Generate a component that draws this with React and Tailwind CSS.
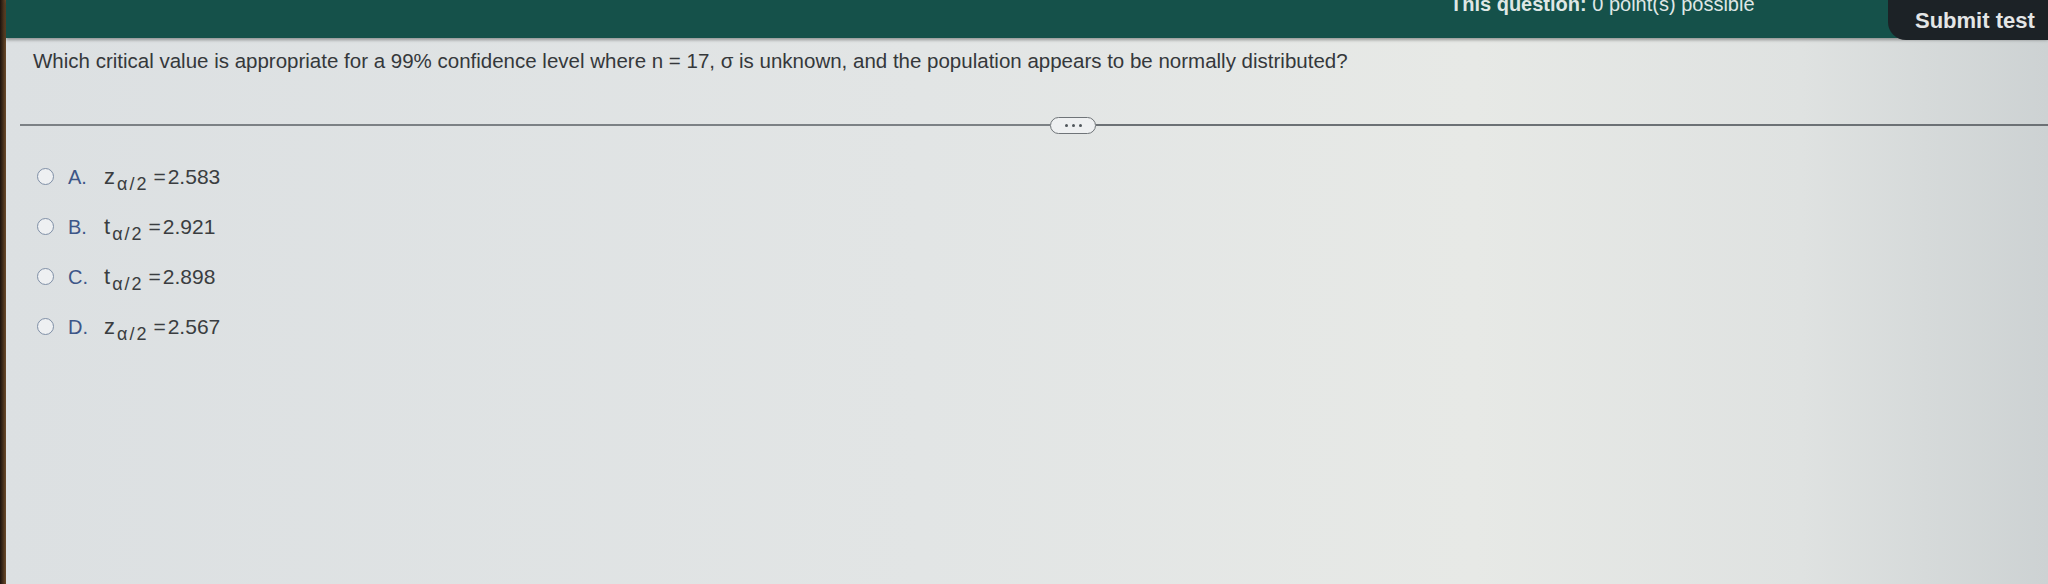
const options = [
  { letter: 'A', sym: 'z', value: '2.583' },
  { letter: 'B', sym: 't', value: '2.921' },
  { letter: 'C', sym: 't', value: '2.898' },
  { letter: 'D', sym: 'z', value: '2.567' },
];

const Option = ({ letter, sym, value }) => (
  <div className="flex items-center h-[50px]">
    <span className="w-[17px] h-[17px] rounded-full border-[1.5px] border-[#7f8fa6] bg-[#eef0f2]" />
    <span className="ml-[14px] w-[36px] text-[20px] text-[#3d5688]">{letter}.</span>
    <span className="text-[21px] text-[#3a3d40] flex items-baseline">
      <span className="text-[22px]">{sym}</span>
      <span className="ml-[2px] text-[18px] relative top-[6px] tracking-[2px]">α/2</span>
      <span className="ml-[5px]">=</span>
      <span className="ml-[2px]">{value}</span>
    </span>
  </div>
);

export default function App() {
  return (
    <div
      className="w-[2048px] h-[584px] flex overflow-hidden bg-[linear-gradient(90deg,#dce0e2_0%,#e2e5e5_45%,#e7e9e6_72%,#dfe2e1_88%,#cdd2d3_100%)]"
      style={{ fontFamily: '"Liberation Sans", Arial, sans-serif' }}
    >
      {/* screen bezel */}
      <div className="w-[6px] h-full bg-[linear-gradient(90deg,#1b120c,#6b4a2a)]" />

      <div className="flex-1 flex flex-col">
        {/* header */}
        <div className="h-[38px] bg-[#15514a] flex justify-end items-start relative shadow-[0_2px_3px_rgba(0,0,0,0.35)]">
          <div className="absolute left-[1444px] top-[-8px] text-[20px] leading-[24px] text-[#dfe7e5] whitespace-nowrap">
            <span className="font-bold">This question:</span> 0 point(s) possible
          </div>
          <div className="h-[40px] w-[160px] bg-[#1c2226] rounded-bl-[18px] flex items-center pl-[27px]">
            <span className="text-[22px] font-bold text-[#e4e6e6] whitespace-nowrap">Submit test</span>
          </div>
        </div>

        {/* question */}
        <div className="pl-[27px] pt-[8px] text-[20.5px] text-[#35383b] whitespace-nowrap">
          Which critical value is appropriate for a 99% confidence level where n = 17, σ is unknown, and the population appears to be normally distributed?
        </div>

        {/* divider */}
        <div className="mt-[40px] ml-[14px] flex items-center">
          <div className="w-[1030px] h-[2px] bg-[#7c8185]" />
          <div className="w-[46px] h-[17px] rounded-full border-[1.5px] border-[#6f7478] bg-[#eef0f1] flex items-center justify-center gap-[4px]">
            <span className="w-[3px] h-[3px] rounded-full bg-[#50565b]" />
            <span className="w-[3px] h-[3px] rounded-full bg-[#50565b]" />
            <span className="w-[3px] h-[3px] rounded-full bg-[#50565b]" />
          </div>
          <div className="flex-1 h-[2px] bg-[#6c7175]" />
        </div>

        {/* answers */}
        <div className="mt-[18px] pl-[31px] flex flex-col">
          {options.map((o) => (
            <Option key={o.letter} {...o} />
          ))}
        </div>
      </div>
    </div>
  );
}
